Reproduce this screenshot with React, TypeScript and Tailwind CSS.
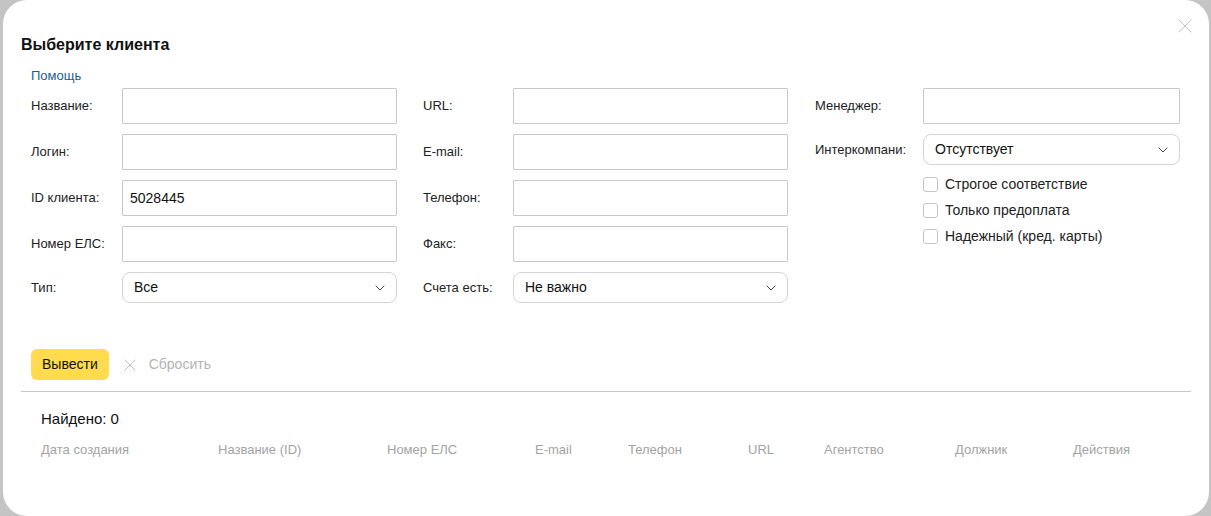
import React from 'react';
import { ChevronDown, X } from 'lucide-react';

const font = { fontFamily: '"Liberation Sans", Arial, sans-serif' };

// Plain text input with a label on the left
const Field: React.FC<{ label: string; value?: string; labelW: string; inputW: string }> = ({ label, value, labelW, inputW }) => (
    <div className="flex items-center h-9">
        <span className={`${labelW} shrink-0 text-[13px] text-[#222]`}>{label}</span>
        <input
            type="text"
            defaultValue={value}
            className={`${inputW} h-9 border border-[#c8c8c8] rounded-[1px] px-[7px] text-[14px] text-[#111] outline-none`}
        />
    </div>
);

// Select-looking box with chevron
const SelectField: React.FC<{ label: string; value: string; labelW: string; inputW: string }> = ({ label, value, labelW, inputW }) => (
    <div className="flex items-center h-[31px]">
        <span className={`${labelW} shrink-0 text-[13px] text-[#222]`}>{label}</span>
        <div className={`${inputW} h-[31px] border border-[#d4d4d4] rounded-[8px] pl-[11px] pr-[8px] flex items-center justify-between text-[14px] text-[#111]`}>
            <span>{value}</span>
            <ChevronDown size={16} strokeWidth={1.4} className="text-[#333]" />
        </div>
    </div>
);

const Check: React.FC<{ label: string }> = ({ label }) => (
    <label className="flex items-center h-[26px] gap-[7px]">
        <span className="w-[15px] h-[15px] rounded-[3px] border border-[#c4c4c4] bg-white" />
        <span className="text-[14px] text-[#222]">{label}</span>
    </label>
);

const columns = [
    { label: 'Дата создания', w: 'w-[177px]' },
    { label: 'Название (ID)', w: 'w-[169px]' },
    { label: 'Номер ЕЛС', w: 'w-[148px]' },
    { label: 'E-mail', w: 'w-[93px]' },
    { label: 'Телефон', w: 'w-[120px]' },
    { label: 'URL', w: 'w-[76px]' },
    { label: 'Агентство', w: 'w-[131px]' },
    { label: 'Должник', w: 'w-[118px]' },
    { label: 'Действия', w: 'w-[100px]' },
];

export default function App() {
    return (
        <div className="w-[1211px] h-[516px] bg-[#c4c4c4] pl-[3px] pr-[2px] overflow-hidden" style={font}>
            <div className="relative h-[516px] bg-white rounded-[24px] pt-[35px] pl-[18px] pr-[18px]">
                <button className="absolute right-[12px] top-[14px] text-[#b4b4b4]">
                    <X size={24} strokeWidth={0.8} />
                </button>

                <h1 className="text-[16px] font-bold text-[#111] leading-[20px]">Выберите клиента</h1>
                <a className="block ml-[10px] mt-[13px] text-[13px] text-[#1b5d93] leading-[16px]">Помощь</a>

                {/* filter form */}
                <div className="flex ml-[10px] mt-[4px]">
                    <div className="flex flex-col gap-[10px] w-[392px]">
                        <Field label="Название:" labelW="w-[91px]" inputW="w-[275px]" />
                        <Field label="Логин:" labelW="w-[91px]" inputW="w-[275px]" />
                        <Field label="ID клиента:" value="5028445" labelW="w-[91px]" inputW="w-[275px]" />
                        <Field label="Номер ЕЛС:" labelW="w-[91px]" inputW="w-[275px]" />
                        <SelectField label="Тип:" value="Все" labelW="w-[91px]" inputW="w-[275px]" />
                    </div>
                    <div className="flex flex-col gap-[10px] w-[392px]">
                        <Field label="URL:" labelW="w-[90px]" inputW="w-[275px]" />
                        <Field label="E-mail:" labelW="w-[90px]" inputW="w-[275px]" />
                        <Field label="Телефон:" labelW="w-[90px]" inputW="w-[275px]" />
                        <Field label="Факс:" labelW="w-[90px]" inputW="w-[275px]" />
                        <SelectField label="Счета есть:" value="Не важно" labelW="w-[90px]" inputW="w-[275px]" />
                    </div>
                    <div className="flex flex-col gap-[10px]">
                        <Field label="Менеджер:" labelW="w-[108px]" inputW="w-[257px]" />
                        <SelectField label="Интеркомпани:" value="Отсутствует" labelW="w-[108px]" inputW="w-[257px]" />
                        <div className="ml-[108px] -mt-[4px] flex flex-col">
                            <Check label="Строгое соответствие" />
                            <Check label="Только предоплата" />
                            <Check label="Надежный (кред. карты)" />
                        </div>
                    </div>
                </div>

                {/* actions */}
                <div className="flex items-center ml-[10px] mt-[46px] h-[31px]">
                    <button className="h-[31px] px-[11px] rounded-[6px] bg-[#ffdb4d] text-[14px] text-[#111]">Вывести</button>
                    <button className="flex items-center ml-[11px] gap-[9px] text-[14px] text-[#b3b3b3]">
                        <X size={20} strokeWidth={1} />
                        <span>Сбросить</span>
                    </button>
                </div>
                <div className="mt-[11px] h-px bg-[#c8c8c8]" />

                <div className="ml-[20px] mt-[18px] text-[15px] text-[#111] leading-[18px]">Найдено: 0</div>
                <div className="flex ml-[20px] mt-[12px] text-[13px] text-[#a3a3a3]">
                    {columns.map((c) => (
                        <span key={c.label} className={`${c.w} shrink-0`}>{c.label}</span>
                    ))}
                </div>
            </div>
        </div>
    );
}
